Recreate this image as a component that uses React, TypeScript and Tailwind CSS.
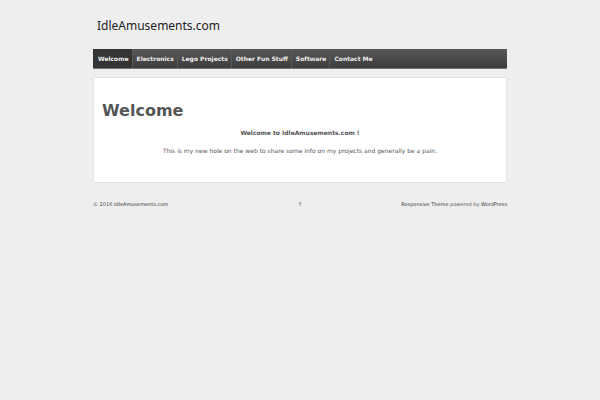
const links = [
  "Electronics",
  "Lego Projects",
  "Other Fun Stuff",
  "Software",
  "Contact Me",
];

export default function App() {
  return (
    <div className="min-h-screen bg-[#eeeeee] px-6 pt-4 font-['DejaVu_Sans',sans-serif] text-[6px] text-[#555555]">
      <div className="mx-auto max-w-[414px]">
        <header>
          <a
            href="#home"
            className="ml-1 block pt-0.5 font-['Noto_Sans',sans-serif] text-[12px] leading-4 text-[#222222]"
          >
            IdleAmusements.com
          </a>
          <nav className="mt-[15px] border-b border-[#777777] bg-linear-to-b from-[#585858] to-[#3d3d3d] font-bold leading-[19px]">
            <ul className="flex">
              <li>
                <a href="#welcome" className="block border-l border-[#343434] bg-[#343434] pr-[3px] pl-1 text-[#eeeeee]">
                  Welcome
                </a>
              </li>
              {links.map((label) => (
                <li key={label}>
                  <a href="#page" className="block border-l border-[#585858] pr-[3px] pl-1 text-[#eeeeee]">
                    {label}
                  </a>
                </li>
              ))}
            </ul>
          </nav>
        </header>
        <main className="mt-2 rounded-xs border border-[#e5e5e5] bg-white px-2 pt-6 pb-[26px]">
          <h1 className="text-[16px] font-bold leading-[18px]">Welcome</h1>
          <p className="mt-2 text-center font-bold leading-[10px]">Welcome to IdleAmusements.com !</p>
          <p className="mt-2 text-center leading-[10px]">
            This is my new hole on the web to share some info on my projects and generally be a pain.
          </p>
        </main>
        <footer className="mt-4 grid grid-cols-3 text-[5px] leading-[10px]">
          <p>
            © 2016{" "}
            <a href="#home" className="text-[#333333]">
              IdleAmusements.com
            </a>
          </p>
          <a href="#top" className="text-center text-[#333333]">
            ↑
          </a>
          <p className="text-right">
            <a href="#theme" className="text-[#333333]">
              Responsive Theme
            </a>{" "}
            powered by{" "}
            <a href="#wordpress" className="text-[#333333]">
              WordPress
            </a>
          </p>
        </footer>
      </div>
    </div>
  );
}
